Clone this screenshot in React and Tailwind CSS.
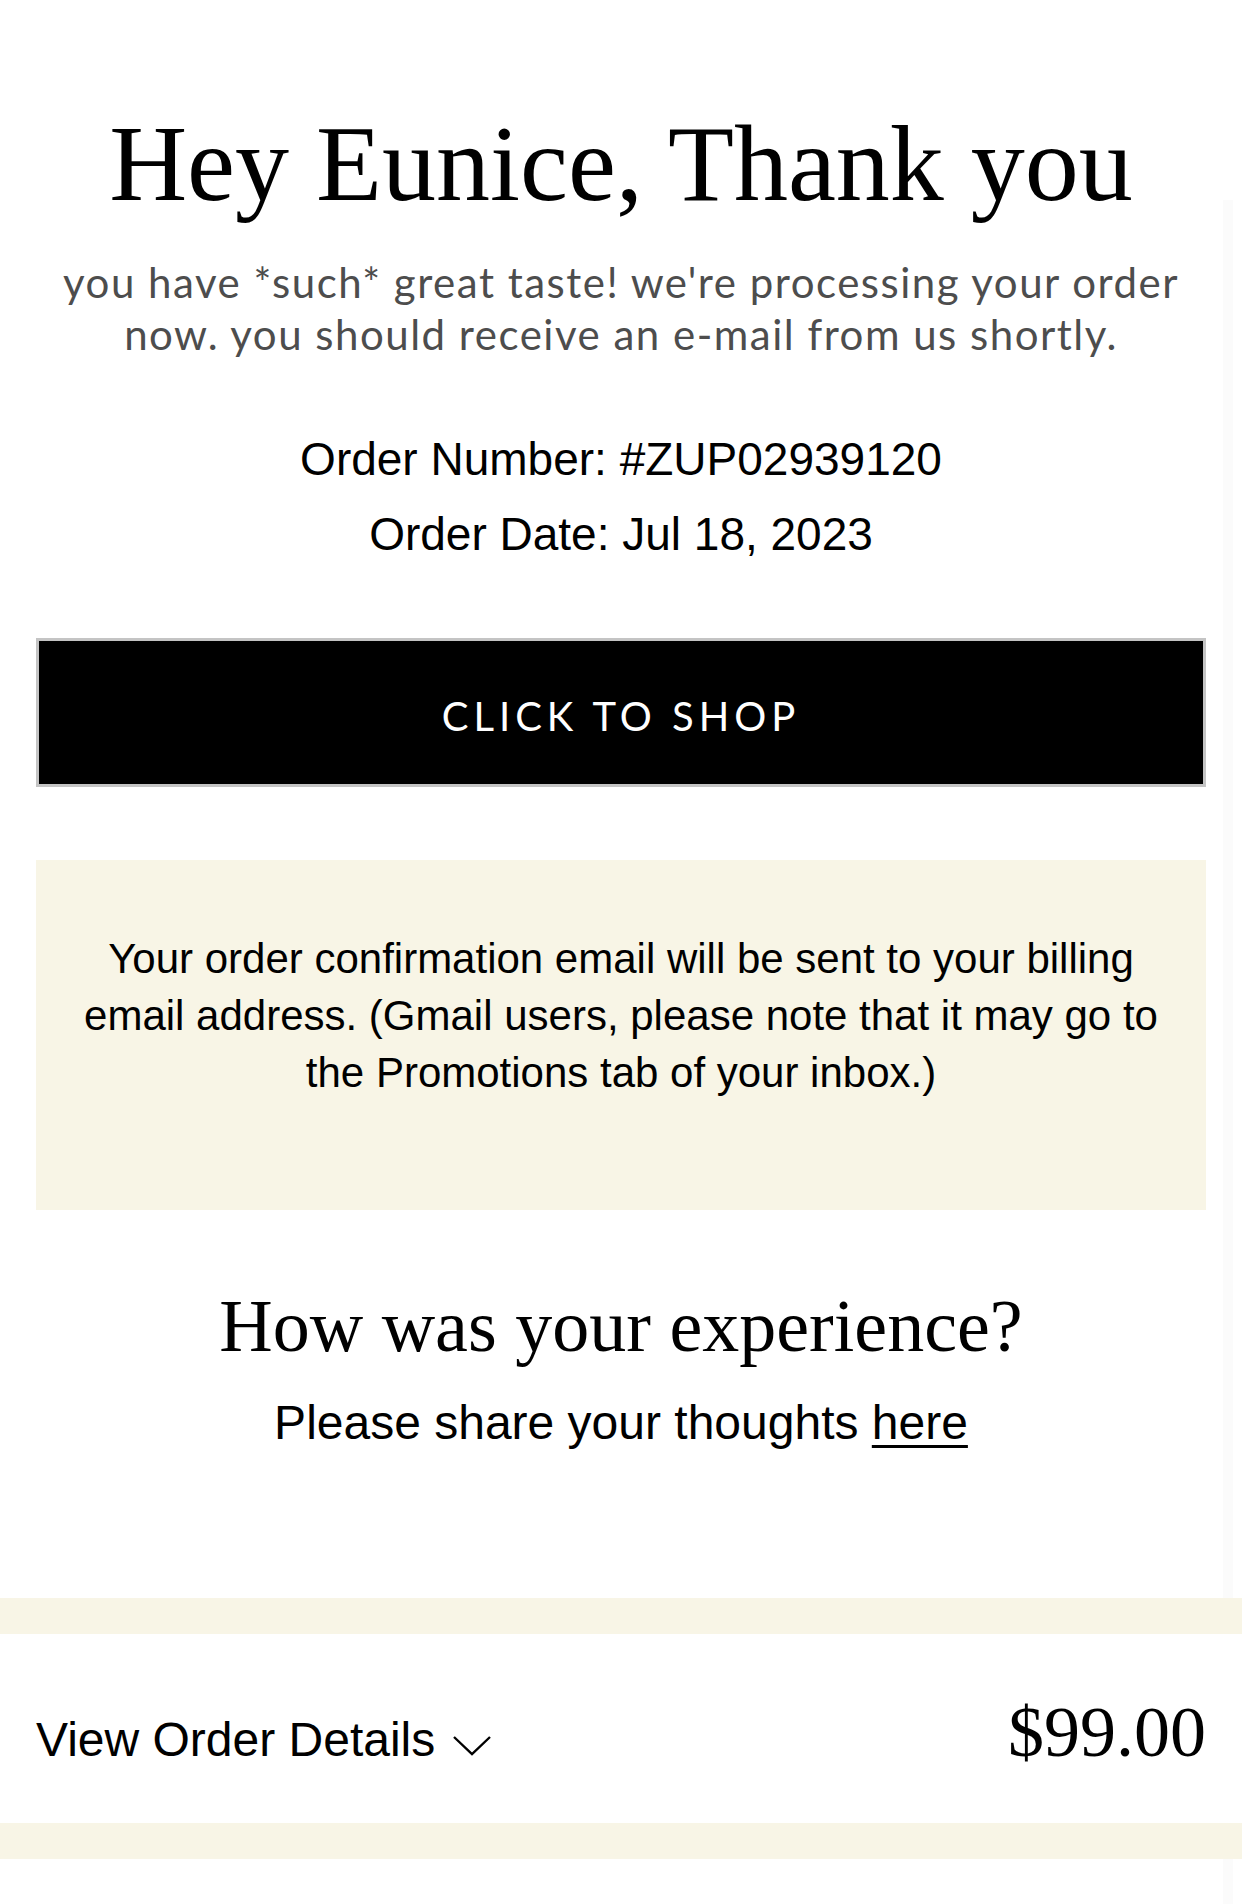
import React from "react";

const serif = "font-['Liberation_Serif','Times_New_Roman',serif]";
const sans = "font-['Liberation_Sans',Arial,sans-serif]";
const geo = "font-['Lato','Open_Sans',sans-serif]";

export default function App() {
  return (
    <div className="relative min-h-[1904px] w-full bg-white text-black">
      {/* faint scroll track at the right edge */}
      <div className="absolute right-[9px] top-[200px] bottom-0 w-[10px] bg-[#fbfbfb]"></div>

      <div className="relative px-[36px] pt-[104px]">
        {/* greeting */}
        <h1 className={`${serif} text-center text-[108px] leading-[119px] font-normal`}>
          Hey Eunice, Thank you
        </h1>
        <p className={`${geo} mt-[33px] text-center text-[42px] leading-[52px] tracking-[1.5px] text-[#4d4d4d]`}>
          you have *such* great taste! we're processing your order
          <br />
          now. you should receive an e-mail from us shortly.
        </p>

        {/* order meta */}
        <div className={`${sans} mt-[62px] text-center text-[46px] leading-[75px]`}>
          <div>Order Number: #ZUP02939120</div>
          <div>Order Date: Jul 18, 2023</div>
        </div>

        <button className="mt-[66px] flex h-[149px] w-full items-center justify-center border-[3px] border-[#c4c4c4] bg-black pt-[6px]">
          <span className={`${geo} text-[40px] tracking-[5px] text-white`}>CLICK TO SHOP</span>
        </button>

        {/* notice */}
        <div className={`${sans} mt-[73px] h-[350px] bg-[#f8f5e6] px-[44px] pt-[70px] text-center text-[42px] leading-[57px]`}>
          Your order confirmation email will be sent to your billing email address. (Gmail users, please note that it may go to the Promotions tab of your inbox.)
        </div>

        {/* feedback */}
        <h2 className={`${serif} mt-[72px] text-center text-[74px] leading-[89px] font-normal`}>
          How was your experience?
        </h2>
        <p className={`${sans} mt-[23px] text-center text-[48px] leading-[58px]`}>
          Please share your thoughts <a href="#" className="underline underline-offset-[6px] decoration-[3px]">here</a>
        </p>
      </div>

      {/* order summary */}
      <div className="relative mt-[146px] h-[36px] bg-[#f8f5e6]"></div>
      <div className="relative flex h-[189px] items-baseline justify-between bg-white px-[36px] pt-[62px]">
        <div className={`${sans} flex items-baseline gap-[18px] text-[48px]`}>
          <span>View Order Details</span>
          <svg className="h-[20px] w-[38px]" viewBox="0 0 38 20" fill="none" stroke="black" strokeWidth="2.4">
            <path d="M1 1 L19 18 L37 1" />
          </svg>
        </div>
        <div className={`${serif} text-[72px] leading-none`}>$99.00</div>
      </div>
      <div className="relative h-[36px] bg-[#f8f5e6]"></div>
    </div>
  );
}
